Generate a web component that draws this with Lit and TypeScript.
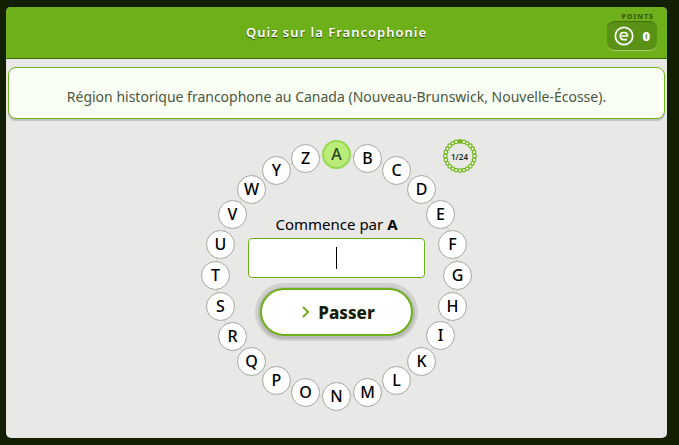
import { LitElement, html, css, svg } from "lit";
import { customElement, property, state } from "lit/decorators.js";
import { classMap } from "lit/directives/class-map.js";
import { styleMap } from "lit/directives/style-map.js";

const LETTERS = "ABCDEFGHIKLMNOPQRSTUVWYZ".split("");

@customElement("letter-wheel")
class LetterWheel extends LitElement {
  @property({ type: Number }) current = 0;

  static styles = css`
    :host {
      display: grid;
      place-items: center;
      position: relative;
      width: 271px;
      height: 271px;
    }
    .track {
      position: absolute;
      inset: 14px;
      border: 1px solid #d3d4d0;
      border-radius: 50%;
    }
    .letters {
      position: absolute;
      inset: 0;
      margin: 0;
      padding: 0;
      list-style: none;
      pointer-events: none;
    }
    .letter {
      box-sizing: border-box;
      position: absolute;
      width: 29px;
      height: 29px;
      border: 1px solid #a3a79b;
      border-radius: 50%;
      background: #fff;
      color: #000;
      font-size: 16px;
      font-weight: 500;
      line-height: 26px;
      text-align: center;
    }
    .current {
      border: 2px solid #97d851;
      background: #baec79;
      color: #2c421a;
      line-height: 24px;
    }
    .middle {
      position: relative;
    }
  `;

  render() {
    const radius = 121;
    return html`
      <div class="track"></div>
      <ol class="letters">
        ${LETTERS.map((letter, i) => {
          const angle = (i / LETTERS.length) * 2 * Math.PI;
          const x = radius + Math.trunc(radius * Math.sin(angle));
          const y = Math.round(radius - radius * Math.cos(angle));
          return html`<li
            class=${classMap({ letter: true, current: i === this.current })}
            style=${styleMap({ left: `${x}px`, top: `${y}px` })}
          >${letter}</li>`;
        })}
      </ol>
      <div class="middle"><slot></slot></div>
    `;
  }
}

@customElement("progress-badge")
class ProgressBadge extends LitElement {
  @property({ type: Number }) step = 1;
  @property({ type: Number }) total = 24;

  static styles = css`
    :host {
      display: grid;
      place-items: center;
      width: 34px;
      height: 34px;
      color: #1c2b12;
      font-size: 8px;
      font-weight: 600;
    }
    svg,
    span {
      grid-area: 1 / 1;
    }
    circle {
      fill: #f3fbe8;
      stroke: #70b51a;
      stroke-width: 1.2;
    }
    .done {
      fill: #70b51a;
    }
  `;

  render() {
    return html`
      <svg width="34" height="34" viewBox="-17 -17 34 34" aria-hidden="true">
        ${Array.from({ length: this.total }, (_, i) => {
          const angle = (i / this.total) * 2 * Math.PI;
          return svg`<circle
            class=${i < this.step ? "done" : ""}
            cx=${(14.6 * Math.sin(angle)).toFixed(2)}
            cy=${(-14.6 * Math.cos(angle)).toFixed(2)}
            r="1.8" />`;
        })}
      </svg>
      <span>${this.step}/${this.total}</span>
    `;
  }
}

@customElement("app-root")
class AppRoot extends LitElement {
  @state() private index = 0;

  static styles = css`
    :host {
      display: flex;
      box-sizing: border-box;
      min-height: 100vh;
      padding: 7px 12px 7px 6px;
      background: #121f02;
      font-family: "Noto Sans", "Open Sans", sans-serif;
    }
    .card {
      flex: 1;
      min-width: 0;
      overflow: hidden;
      border-radius: 5px;
      background: #e8e8e6;
    }
    .header {
      display: grid;
      grid-template-columns: 1fr auto 1fr;
      align-items: center;
      box-sizing: border-box;
      height: 52px;
      padding: 0 10px 2px;
      border-bottom: 1px solid #3b670b;
      background: #6eb01a;
    }
    .title {
      grid-column: 2;
      margin: 0;
      color: #fff;
      font-size: 13px;
      font-weight: 600;
      letter-spacing: 1px;
      text-shadow: 0 1px 1px #2c4a08;
    }
    .points {
      justify-self: end;
      display: flex;
      flex-direction: column;
      align-items: flex-end;
    }
    .points-label {
      margin-right: 3px;
      color: #365c0b;
      font-size: 7px;
      font-weight: 800;
      letter-spacing: 1px;
      line-height: 8px;
    }
    .score {
      display: flex;
      align-items: center;
      justify-content: space-between;
      box-sizing: border-box;
      width: 50px;
      height: 30px;
      padding: 0 7px;
      border-top: 1px solid #43700d;
      border-bottom: 1px solid #a6cf70;
      border-radius: 8px;
      background: #5a9215;
      color: #fff;
      font-size: 13px;
      font-weight: 900;
    }
    .question {
      display: flex;
      align-items: center;
      justify-content: center;
      box-sizing: border-box;
      min-height: 52px;
      margin: 8px 2px 0;
      padding: 6px 16px 0;
      border: 1px solid #6eb01a;
      border-radius: 8px;
      background: #f9fff4;
      box-shadow: 0 2px 1px #c3c4c1;
      color: #4d5641;
      font-size: 14px;
      font-weight: 400;
      text-align: center;
    }
    .stage {
      display: flex;
      justify-content: center;
      position: relative;
      padding: 21px 0 27px;
    }
    .badge {
      position: absolute;
      top: 20px;
      left: calc(50% + 106px);
    }
    .answer {
      display: flex;
      flex-direction: column;
      align-items: center;
      width: 177px;
      padding-bottom: 3px;
    }
    .prompt {
      margin-bottom: 2px;
      color: #000;
      font-size: 15px;
      line-height: 24px;
    }
    .prompt b {
      font-weight: 700;
    }
    .field {
      box-sizing: border-box;
      width: 100%;
      height: 40px;
      padding: 0 10px;
      border: 1px solid #6eb01a;
      border-radius: 4px;
      outline: none;
      background: #fff linear-gradient(#000, #000) center / 1px 22px no-repeat;
      font: 18px "Noto Sans", sans-serif;
      text-align: center;
    }
    .field:focus {
      background-image: none;
    }
    .skip {
      display: flex;
      align-items: center;
      justify-content: center;
      gap: 8px;
      box-sizing: border-box;
      width: 153px;
      height: 48px;
      margin-top: 10px;
      padding: 0 0 0 4px;
      border: 2px solid #6eb01a;
      border-radius: 24px;
      background: #fff;
      box-shadow: 0 1px 0 2px #b9bab7, 0 0 0 5px #d0d1ce;
      color: #142005;
      font: 800 17px "Noto Sans", sans-serif;
    }
  `;

  private skip() {
    this.index = (this.index + 1) % LETTERS.length;
  }

  render() {
    return html`
      <main class="card">
        <header class="header">
          <h1 class="title">Quiz sur la Francophonie</h1>
          <div class="points">
            <span class="points-label">POINTS</span>
            <div class="score">
              <svg width="20" height="20" viewBox="0 0 20 20" fill="none" stroke="#fff" aria-hidden="true">
                <circle cx="10" cy="10" r="8.7" stroke-width="1.8" />
                <path d="M6.3 10H13.5Q13.7 6.5 10 6.5Q6.2 6.5 6.2 10Q6.2 13.6 10 13.6H13" stroke-width="1.7" />
              </svg>
              <span>0</span>
            </div>
          </div>
        </header>
        <div class="question">
          Région historique francophone au Canada (Nouveau-Brunswick, Nouvelle-Écosse).
        </div>
        <section class="stage">
          <letter-wheel .current=${this.index}>
            <div class="answer">
              <label class="prompt" for="answer">Commence par <b>${LETTERS[this.index]}</b></label>
              <input class="field" id="answer" type="text" autocomplete="off" />
              <button class="skip" type="button" @click=${this.skip}>
                <svg width="8" height="12" viewBox="0 0 8 12" fill="none" stroke="#6eb01a" stroke-width="2" stroke-linecap="round" aria-hidden="true">
                  <path d="M1.5 1.5L6 6L1.5 10.5" />
                </svg>
                Passer
              </button>
            </div>
          </letter-wheel>
          <progress-badge class="badge" .step=${this.index + 1} .total=${LETTERS.length}></progress-badge>
        </section>
      </main>
    `;
  }
}
